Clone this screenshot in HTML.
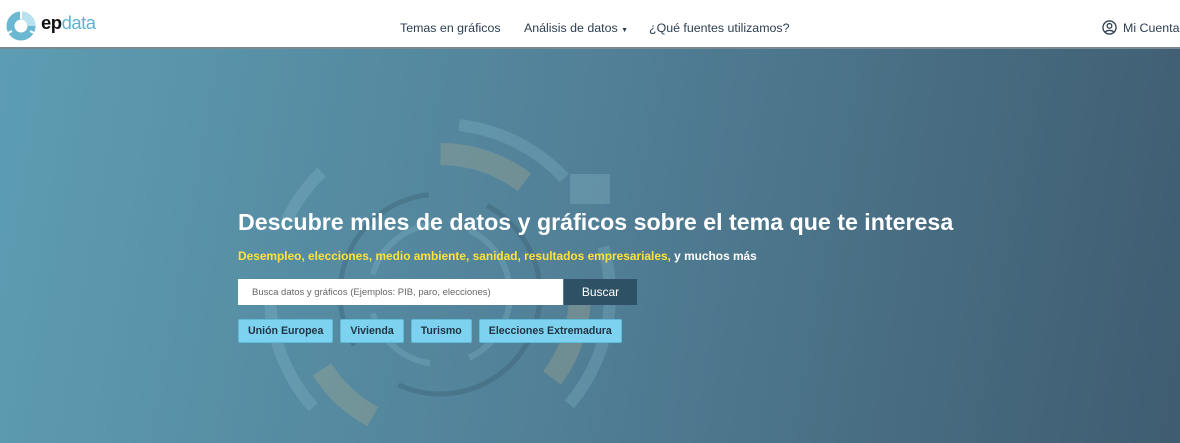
<!DOCTYPE html>
<html><head><meta charset="utf-8"><style>
*{margin:0;padding:0;box-sizing:border-box}
body{width:1180px;height:443px;overflow:hidden;font-family:"Liberation Sans",sans-serif;background:#fff}
.hdr{height:49px;border-bottom:2px solid #7a8a94;position:relative;background:#fff}
.logo{position:absolute;left:6px;top:11px;display:flex;align-items:center}
.logo>span{font-size:18.5px;font-weight:bold;letter-spacing:-0.5px;margin-left:5px;margin-top:-6px}
.nav{position:absolute;top:21px;font-size:12.4px;color:#2c3e50;white-space:nowrap}
.hero{position:absolute;top:49px;left:0;width:1180px;height:394px;background:linear-gradient(100deg,#5d9db3 0%,#517f96 50%,#3f5c70 100%);overflow:hidden}
h1{position:absolute;left:238px;top:160px;color:#fff;font-size:23.2px;font-weight:bold;white-space:nowrap}
.sub{position:absolute;left:238px;top:200px;font-size:11.9px;font-weight:bold;color:#ffe23a;white-space:nowrap}
.sub b{color:#fff}
.search{position:absolute;left:238px;top:230px;width:325px;height:26px;background:#fff;font-size:9.5px;color:#666;padding:8px 14px}
.btn{position:absolute;left:564px;top:230px;width:73px;height:26px;background:#2f5166;color:#fff;font-size:12px;text-align:center;line-height:26px}
.tags{position:absolute;left:238px;top:270px;display:flex;gap:7px}
.tags div{background:#7dd3ef;border:1px solid #5fbcd8;border-radius:2px;color:#234;font-size:10.6px;font-weight:bold;padding:0 9px;height:24px;line-height:23px}
</style></head><body>
<div class="hdr">
<div class="logo"><svg width="30" height="30" viewBox="0 0 30 30"><circle cx="15" cy="15" r="10.5" fill="none" stroke="#6bb8d2" stroke-width="8"/><path d="M15 4.5A10.5 10.5 0 0 1 25.5 15" fill="none" stroke="#b8e2ef" stroke-width="8"/><line x1="15" y1="0" x2="15" y2="8" stroke="#fff" stroke-width="2"/><line x1="24" y1="20" x2="30" y2="23" stroke="#fff" stroke-width="2"/><line x1="6" y1="20" x2="0" y2="23" stroke="#fff" stroke-width="2"/></svg><span><span style="color:#111">ep</span><span style="color:#5fb2d0;font-weight:normal">data</span></span></div>
<div class="nav" style="left:400px">Temas en gráficos</div>
<div class="nav" style="left:524px">Análisis de datos <span style="font-size:7px">▼</span></div>
<div class="nav" style="left:649px">¿Qué fuentes utilizamos?</div>
<div class="nav" style="left:1102px;top:20px;display:flex;align-items:center"><svg width="15" height="15" viewBox="0 0 16 16" style="margin-right:6px"><circle cx="8" cy="8" r="7" fill="none" stroke="#2c3e50" stroke-width="1.4"/><circle cx="8" cy="6.3" r="2.5" fill="none" stroke="#2c3e50" stroke-width="1.4"/><path d="M3.5 13c1.5-2.5 7.5-2.5 9 0" fill="none" stroke="#2c3e50" stroke-width="1.4"/></svg>Mi Cuenta</div>
</div>
<div class="hero">
<svg width="1180" height="394" style="position:absolute;left:0;top:0;opacity:.25">
<circle cx="440" cy="245" r="170" fill="none" stroke="#8fc2d4" stroke-width="12" stroke-dasharray="120 80 60 150"/>
<circle cx="440" cy="245" r="140" fill="none" stroke="#c9b98a" stroke-width="22" stroke-dasharray="90 200 70 300"/>
<circle cx="440" cy="245" r="100" fill="none" stroke="#2c4a5c" stroke-width="5" stroke-dasharray="200 60"/>
<circle cx="440" cy="245" r="70" fill="none" stroke="#8fc2d4" stroke-width="6" stroke-dasharray="80 40"/>
<rect x="570" y="125" width="40" height="30" fill="#9fc8d8"/>
</svg>
<h1>Descubre miles de datos y gráficos sobre el tema que te interesa</h1>
<div class="sub">Desempleo, elecciones, medio ambiente, sanidad, resultados empresariales, <b>y muchos más</b></div>
<div class="search">Busca datos y gráficos (Ejemplos: PIB, paro, elecciones)</div>
<div class="btn">Buscar</div>
<div class="tags"><div>Unión Europea</div><div>Vivienda</div><div>Turismo</div><div>Elecciones Extremadura</div></div>
</div>
</body></html>
